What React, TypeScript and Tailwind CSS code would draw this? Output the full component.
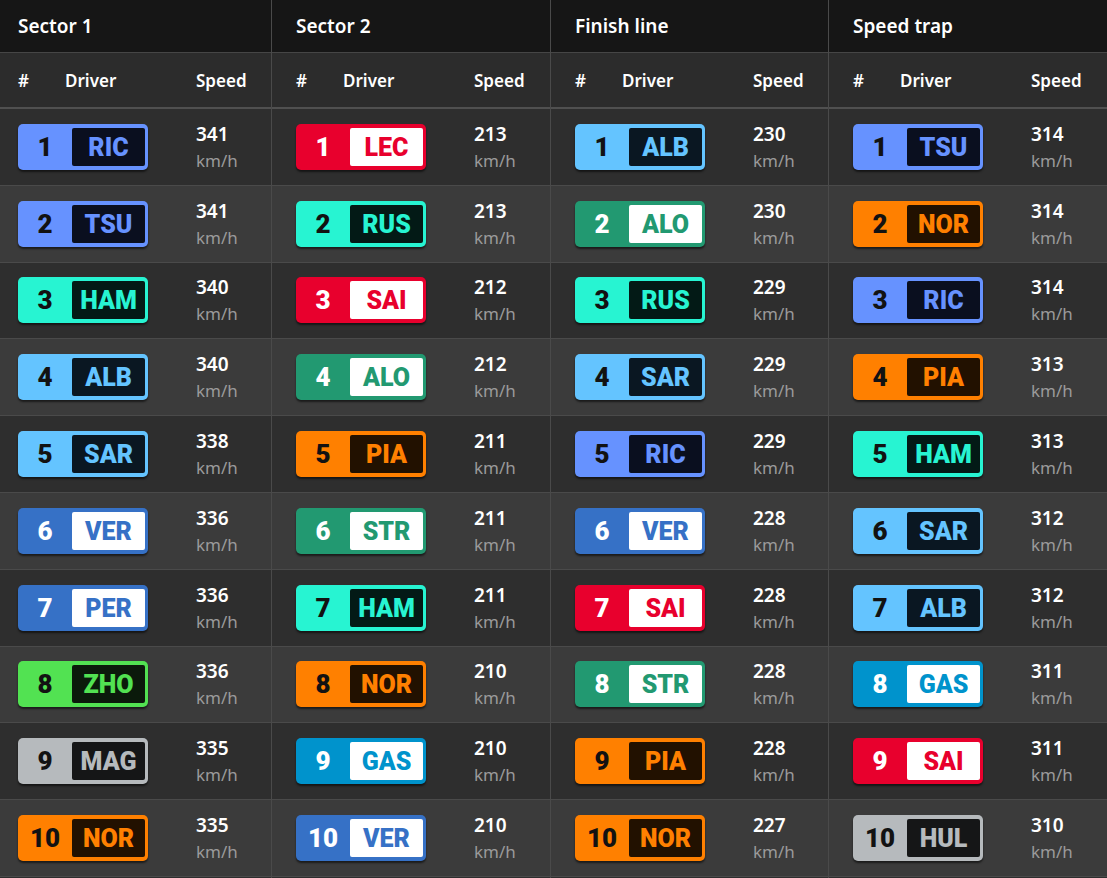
import React from "react";

type Team = { outer: string; num: string; inner: string; code: string };

const T: Record<string, Team> = {
  rb: { outer: "bg-[#6692ff]", num: "text-[#121212]", inner: "bg-[#0a0f1f]", code: "text-[#6692ff]" },
  merc: { outer: "bg-[#27f4d2]", num: "text-[#121212]", inner: "bg-[#031a16]", code: "text-[#27f4d2]" },
  wil: { outer: "bg-[#64c4ff]", num: "text-[#121212]", inner: "bg-[#0a1722]", code: "text-[#64c4ff]" },
  rbr: { outer: "bg-[#3671c6]", num: "text-white", inner: "bg-white", code: "text-[#3671c6]" },
  sau: { outer: "bg-[#52e252]", num: "text-[#121212]", inner: "bg-[#0b1a0b]", code: "text-[#52e252]" },
  haas: { outer: "bg-[#b6babd]", num: "text-[#121212]", inner: "bg-[#151617]", code: "text-[#b6babd]" },
  mcl: { outer: "bg-[#ff8000]", num: "text-[#121212]", inner: "bg-[#221100]", code: "text-[#ff8000]" },
  fer: { outer: "bg-[#e8002d]", num: "text-white", inner: "bg-white", code: "text-[#e8002d]" },
  am: { outer: "bg-[#229971]", num: "text-white", inner: "bg-white", code: "text-[#229971]" },
  alp: { outer: "bg-[#0093cc]", num: "text-white", inner: "bg-white", code: "text-[#0093cc]" },
};

type Entry = [string, string, number];

const columns: { title: string; width: string; pad: string; rows: Entry[] }[] = [
  {
    title: "Sector 1",
    width: "w-[271px]",
    pad: "pl-[18px]",
    rows: [
      ["RIC", "rb", 341],
      ["TSU", "rb", 341],
      ["HAM", "merc", 340],
      ["ALB", "wil", 340],
      ["SAR", "wil", 338],
      ["VER", "rbr", 336],
      ["PER", "rbr", 336],
      ["ZHO", "sau", 336],
      ["MAG", "haas", 335],
      ["NOR", "mcl", 335],
    ],
  },
  {
    title: "Sector 2",
    width: "w-[279px]",
    pad: "pl-[24px]",
    rows: [
      ["LEC", "fer", 213],
      ["RUS", "merc", 213],
      ["SAI", "fer", 212],
      ["ALO", "am", 212],
      ["PIA", "mcl", 211],
      ["STR", "am", 211],
      ["HAM", "merc", 211],
      ["NOR", "mcl", 210],
      ["GAS", "alp", 210],
      ["VER", "rbr", 210],
    ],
  },
  {
    title: "Finish line",
    width: "w-[278px]",
    pad: "pl-[24px]",
    rows: [
      ["ALB", "wil", 230],
      ["ALO", "am", 230],
      ["RUS", "merc", 229],
      ["SAR", "wil", 229],
      ["RIC", "rb", 229],
      ["VER", "rbr", 228],
      ["SAI", "fer", 228],
      ["STR", "am", 228],
      ["PIA", "mcl", 228],
      ["NOR", "mcl", 227],
    ],
  },
  {
    title: "Speed trap",
    width: "w-[279px]",
    pad: "pl-[24px]",
    rows: [
      ["TSU", "rb", 314],
      ["NOR", "mcl", 314],
      ["RIC", "rb", 314],
      ["PIA", "mcl", 313],
      ["HAM", "merc", 313],
      ["SAR", "wil", 312],
      ["ALB", "wil", 312],
      ["GAS", "alp", 311],
      ["SAI", "fer", 311],
      ["HUL", "haas", 310],
    ],
  },
];

const sans = { fontFamily: '"Noto Sans", "Open Sans", sans-serif' };
const badgeFont = { fontFamily: 'Roboto, "Liberation Sans", sans-serif' };

function Badge({ pos, code, team }: { pos: number; code: string; team: Team }) {
  return (
    <div
      className={`flex h-[46px] w-[130px] rounded-[5px] py-[4px] pr-[3px] shadow-[0_2px_2px_rgba(0,0,0,0.55)] ${team.outer}`}
      style={badgeFont}
    >
      <div className={`flex w-[54px] items-center justify-center text-[26px] font-black leading-none ${team.num}`}>
        {pos}
      </div>
      <div
        className={`flex flex-1 items-center justify-center rounded-[2px] pt-[1px] text-[25px] font-black leading-none ${team.inner} ${team.code}`}
      >
        {code}
      </div>
    </div>
  );
}

export default function App() {
  return (
    <div className="flex h-[878px] w-[1107px] overflow-hidden bg-[#2e2e2e] text-white" style={sans}>
      {columns.map((col, ci) => (
        <div
          key={col.title}
          className={`flex shrink-0 flex-col ${col.width} ${ci > 0 ? "border-l border-[#4a4a4a]" : ""}`}
        >
          <div className={`flex h-[53px] items-center border-b border-[#464646] bg-[#161616] ${col.pad}`}>
            <span className="text-[19px] font-semibold">{col.title}</span>
          </div>
          <div
            className={`flex h-[56px] items-center border-b-2 border-[#505050] bg-[#2c2c2c] pt-[1px] text-[17px] font-semibold ${col.pad}`}
          >
            <span className="w-[47px]">#</span>
            <span className="w-[131px]">Driver</span>
            <span>Speed</span>
          </div>
          {col.rows.map(([code, team, speed], ri) => (
            <div
              key={ri}
              className={`flex h-[76.8px] shrink-0 items-center border-b border-[#4a4a4a] ${col.pad} ${
                ri % 2 === 0 ? "bg-[#2e2e2e]" : "bg-[#3b3b3b]"
              }`}
            >
              <div className="w-[178px]">
                <Badge pos={ri + 1} code={code} team={T[team]} />
              </div>
              <div className="flex flex-col leading-none">
                <span className="text-[19px] font-semibold">{speed}</span>
                <span className="mt-[8px] text-[17px] text-[#9a9a9a]">km/h</span>
              </div>
            </div>
          ))}
        </div>
      ))}
    </div>
  );
}
